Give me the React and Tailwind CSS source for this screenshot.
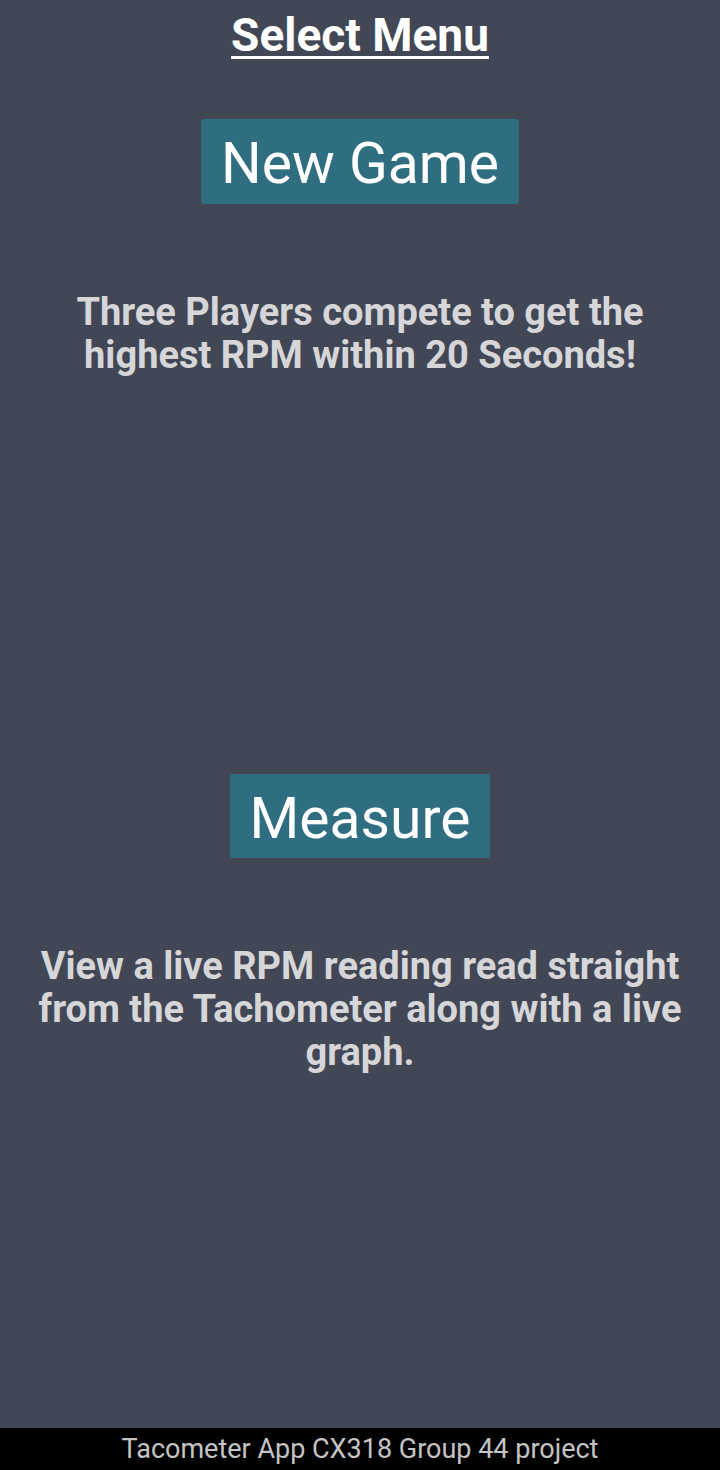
import React from 'react';

const App = () => {
  return (
    <div className="flex flex-col h-[1470px] bg-[#424756] font-['Roboto',sans-serif]">
      <div className="flex-grow flex flex-col items-center">
        <h1 className="mt-[7px] text-[46px] leading-[56px] font-bold text-white underline underline-offset-[5px] decoration-[3px]">
          Select Menu
        </h1>

        <button className="mt-[56px] px-[20px] pt-[4px] h-[85px] rounded-[3px] bg-[#2e6e80] text-white text-[57px] leading-none">
          New Game
        </button>

        <p className="mt-[87px] w-[640px] text-center text-[38px] leading-[43px] font-bold text-[#d6d6d9]">
          Three Players compete to get the highest RPM within 20 Seconds!
        </p>

        <button className="mt-[397px] px-[20px] pt-[4px] h-[84px] rounded-[3px] bg-[#2e6e80] text-white text-[57px] leading-none">
          Measure
        </button>

        <p className="mt-[87px] w-[664px] text-center text-[38px] leading-[43px] font-bold text-[#d6d6d9]">
          View a live RPM reading read straight from the Tachometer along with a live graph.
        </p>
      </div>

      <footer className="h-[42px] bg-black flex items-center justify-center text-[27px] text-[#c4c4c4]">
        Tacometer App CX318 Group 44 project
      </footer>
    </div>
  );
};

export default App;
